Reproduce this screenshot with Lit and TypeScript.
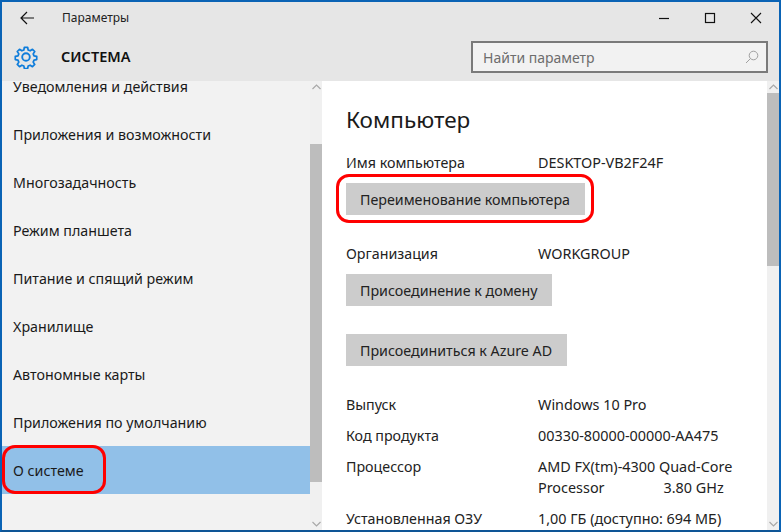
import { LitElement, html, css } from "lit";
import { customElement } from "lit/decorators.js";

const NAV = ["Уведомления и действия","Приложения и возможности","Многозадачность","Режим планшета","Питание и спящий режим","Хранилище","Автономные карты","Приложения по умолчанию","О системе"];

@customElement("app-root")
export class AppRoot extends LitElement {
  static styles = css`
    :host { display:block; width:781px; height:532px; font-family:"Noto Sans","Open Sans",sans-serif; color:#1a1a1a; }
    * { box-sizing:border-box; }
    .win { position:relative; width:781px; height:532px; border:2px solid #0a63b5; border-bottom-color:#0e5596; display:flex; flex-direction:column; overflow:hidden; background:#fff; }
    .head { height:79px; flex:none; background:#e6e6e6; display:flex; flex-direction:column; }
    .bar { height:31px; display:flex; align-items:center; }
    .back { width:60px; padding-left:18px; display:flex; }
    .apptitle { font-size:12px; flex:1; color:#222; }
    .ctl { width:46px; height:31px; display:flex; align-items:center; justify-content:center; }
    .sub { flex:1; display:flex; align-items:flex-start; }
    .gear { margin:12px 0 0 12px; width:24px; height:24px; flex:none; }
    .sys { margin:13px 0 0 23px; font-size:14.5px; font-weight:600; color:#111; flex:1; line-height:20px; }
    .search { margin:8px 11px 0 0; width:297px; height:32px; border:2px solid #7a7a7a; background:#f2f2f2; display:flex; align-items:center; justify-content:space-between; padding:0 7px 0 10px; font-size:14px; color:#6d6d6d; }
    .body { flex:1; display:flex; min-height:0; }
    .side { width:320px; flex:none; background:#f2f2f2; display:flex; overflow:hidden; }
    .nav { width:308px; flex:none; height:100%; overflow:hidden; }
    .nav-in { margin-top:-19px; }
    .item { height:48px; display:flex; align-items:center; padding-left:11px; font-size:14.25px; color:#1a1a1a; }
    .item.sel { background:#91c0e8; }
    .track { width:12px; flex:none; display:flex; flex-direction:column; background:#f0f0f0; }
    .sb-btn { height:12px; flex:none; display:flex; align-items:center; justify-content:center; }
    .gap1 { height:51px; flex:none; }
    .fill { flex:1; }
    .thumb { background:#bdbdbd; flex:none; }
    .side .thumb { height:338px; }
    .main { flex:1; display:flex; min-width:0; }
    .content { flex:1; padding:23px 0 0 24px; font-size:14.25px; color:#222; overflow:hidden; }
    .h { font-size:22.5px; line-height:32px; color:#1a1a1a; margin-bottom:16px; }
    .row { display:flex; line-height:21px; }
    .k { width:192px; flex:none; }
    .v { font-size:14.4px; }
    .btn { display:inline-flex; align-items:center; height:32px; padding:0 14.5px 0 14px; background:#ccc; color:#222; }
    .b1 { margin-top:10px; }
    .o { margin-top:28px; }
    .b2 { margin-top:10px; }
    .b3 { margin-top:28px; }
    .r1 { margin-top:28px; }
    .r2 { margin-top:10px; }
    .ghz { margin-left:59px; }
    .main .thumb { height:173px; }
    .oval { position:absolute; border:3px solid #f00; border-radius:13px; pointer-events:none; }
    .o1 { left:0; top:443px; width:104px; height:49px; }
    .o2 { left:334px; top:172px; width:258px; height:49px; }
  `;
  private chevron(up: boolean) {
    return html`<svg width="9" height="6" viewBox="0 0 9 6" fill="none" stroke="#a8a8a8" stroke-width="1.2"><path d=${up ? "M.5 5L4.5 1L8.5 5" : "M.5 1L4.5 5L8.5 1"}/></svg>`;
  }
  render() {
    return html`<div class="win">
      <div class="head">
        <div class="bar">
          <div class="back"><svg width="14" height="14" viewBox="0 0 14 14" fill="none" stroke="#111" stroke-width="1.2"><path d="M14 7H1M7 1L1 7L7 13"/></svg></div>
          <div class="apptitle">Параметры</div>
          <div class="ctl"><svg width="12" height="12" viewBox="0 0 12 12" stroke="#111" stroke-width="1.2"><path d="M1 6.5H11"/></svg></div>
          <div class="ctl"><svg width="12" height="12" viewBox="0 0 12 12" fill="none" stroke="#111" stroke-width="1.2"><rect x="1.5" y="1.5" width="9" height="9"/></svg></div>
          <div class="ctl"><svg width="12" height="12" viewBox="0 0 12 12" fill="none" stroke="#111" stroke-width="1.1"><path d="M1 1L11 11M11 1L1 11"/></svg></div>
        </div>
        <div class="sub">
          <svg class="gear" viewBox="0 0 24 24" fill="none" stroke="#0f7ddb" stroke-width="1.9" stroke-linejoin="round">
            <circle cx="12" cy="12" r="3.8"/>
            <path d="M10.2 1.2h3.6l.6 3 2.2.9 2.6-1.7 2.5 2.5-1.7 2.6.9 2.2 3 .6v3.6l-3 .6-.9 2.2 1.7 2.6-2.5 2.5-2.6-1.7-2.2.9-.6 3h-3.6l-.6-3-2.2-.9-2.6 1.7-2.5-2.5 1.7-2.6-.9-2.2-3-.6v-3.6l3-.6.9-2.2-1.7-2.6 2.5-2.5 2.6 1.7 2.2-.9z" transform="translate(1.2 1.2) scale(.9)"/>
          </svg>
          <div class="sys">СИСТЕМА</div>
          <div class="search"><span>Найти параметр</span>
            <svg width="14" height="14" viewBox="0 0 14 14" fill="none" stroke="#a0a0a0" stroke-width="1"><circle cx="8.5" cy="5.5" r="4.3"/><path d="M5.5 8.5L1 13"/></svg>
          </div>
        </div>
      </div>
      <div class="body">
        <div class="side">
          <div class="nav"><div class="nav-in">${NAV.map((n,i)=>html`<div class="item ${i===8?"sel":""}">${n}</div>`)}</div></div>
          <div class="track"><div class="sb-btn">${this.chevron(true)}</div><div class="gap1"></div><div class="thumb"></div><div class="fill"></div><div class="sb-btn">${this.chevron(false)}</div></div>
        </div>
        <div class="main">
          <div class="content">
            <div class="h">Компьютер</div>
            <div class="row"><div class="k">Имя компьютера</div><div class="v">DESKTOP-VB2F24F</div></div>
            <div class="b1"><span class="btn">Переименование компьютера</span></div>
            <div class="row o"><div class="k">Организация</div><div class="v">WORKGROUP</div></div>
            <div class="b2"><span class="btn">Присоединение к домену</span></div>
            <div class="b3"><span class="btn">Присоединиться к Azure AD</span></div>
            <div class="row r1"><div class="k">Выпуск</div><div class="v">Windows 10 Pro</div></div>
            <div class="row r2"><div class="k">Код продукта</div><div class="v">00330-80000-00000-AA475</div></div>
            <div class="row r2"><div class="k">Процессор</div><div class="v">AMD FX(tm)-4300 Quad-Core<br>Processor<span class="ghz">3.80 GHz</span></div></div>
            <div class="row r2"><div class="k">Установленная ОЗУ</div><div class="v">1,00 ГБ (доступно: 694 МБ)</div></div>
          </div>
          <div class="track"><div class="sb-btn">${this.chevron(true)}</div><div class="thumb"></div><div class="fill"></div><div class="sb-btn">${this.chevron(false)}</div></div>
        </div>
      </div>
      <div class="oval o1"></div>
      <div class="oval o2"></div>
    </div>`;
  }
}
